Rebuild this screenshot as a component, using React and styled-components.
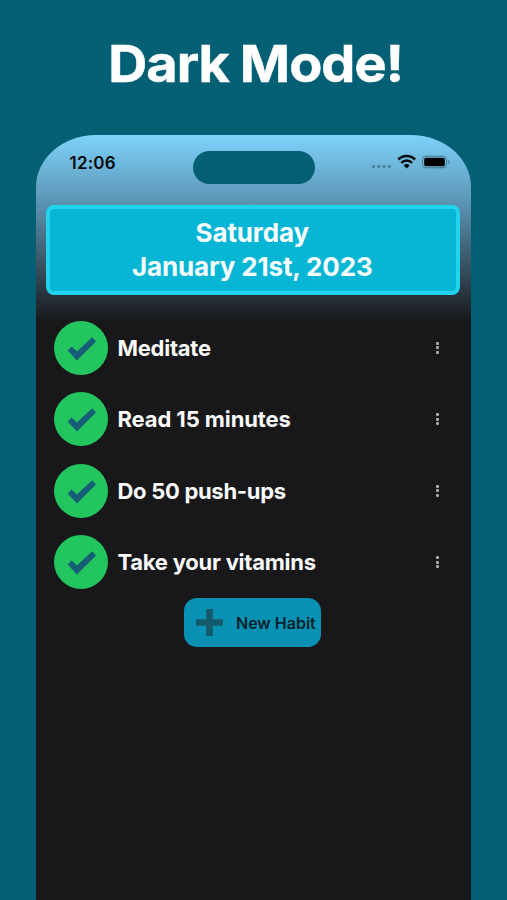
import React from 'react';
import styled, { createGlobalStyle } from 'styled-components';

const GlobalStyle = createGlobalStyle`
* {
    box-sizing: border-box;
}
body {
    margin: 0;
    background: #035f73;
    font-family: Inter, "Liberation Sans", sans-serif;
}
`

const Page = styled.main`
display: flex;
flex-direction: column;
width: 507px;
height: 900px;
overflow: hidden;
background: #035f73;
`

const Title = styled.h1`
display: flex;
justify-content: center;
align-items: center;
height: 135px;
margin: 0;
padding: 0 0 7px 4px;
color: #fff;
font-size: 51px;
font-weight: 700;
line-height: 60px;
letter-spacing: -0.9px;
word-spacing: -1px;
white-space: nowrap;
transform: scaleX(1.06);
-webkit-text-stroke: 0.5px #fff;
`

const Phone = styled.section`
flex: 1;
width: 435px;
margin-left: 36px;
padding: 0 11px 0 9.5px;
border-radius: 60px 60px 0 0 / 52px 52px 0 0;
background: linear-gradient(#7dd2fb 0, #5a92b1 70px, #18181a 186px);
`

const StatusBar = styled.header`
display: grid;
grid-template-columns: 147px 122px 1fr;
height: 70px;
padding-top: 15.5px;
`

const Time = styled.time`
padding-left: 24px;
color: #050a0d;
font-size: 17px;
font-weight: 600;
line-height: 24px;
letter-spacing: 0.2px;
`

const Island = styled.div`
height: 33.5px;
border-radius: 17px;
background: #035f73;
`

const StatusIcons = styled.div`
padding: 3.5px 0 0 55.5px;
svg {
    display: block;
}
`

const DateCard = styled.div`
display: flex;
flex-direction: column;
align-items: center;
height: 89.5px;
padding: 7px 1px 0 0;
border: 4px solid #22d3ee;
border-radius: 8px;
background: #06b6d4;
color: #f8fdff;
font-size: 26px;
font-weight: 700;
line-height: 34px;
`

const DateLine = styled.div`
letter-spacing: ${({ $spacing }) => $spacing}px;
`

const HabitList = styled.ul`
display: flex;
flex-direction: column;
gap: 17.5px;
margin: 0;
padding: 26.4px 16.5px 0 8.5px;
list-style: none;
`

const HabitItem = styled.li`
display: flex;
align-items: center;
height: 54px;
`

const CheckCircle = styled.div`
width: 54px;
height: 54px;
border-radius: 50%;
background: #22c55e;
svg {
    display: block;
}
`

const HabitName = styled.span`
flex: 1;
padding-left: 9.5px;
color: #fafafa;
font-size: 22px;
font-weight: 700;
letter-spacing: ${({ $spacing }) => $spacing}px;
`

const MenuDots = styled.div`
display: flex;
flex-direction: column;
gap: 1.5px;
width: 8px;
i {
    width: 3px;
    height: 3px;
    border-radius: 1px;
    background: #a9a9ab;
}
`

const NewHabitButton = styled.button`
display: flex;
align-items: center;
width: 137px;
height: 49.5px;
margin: 8.5px 0 0 138.5px;
padding: 0 0 0 11.5px;
border: 0;
border-radius: 13px;
background: #0891b2;
color: #06222c;
font-family: inherit;
font-size: 16px;
font-weight: 600;
white-space: nowrap;
svg {
    flex: none;
    margin-right: 13.5px;
}
`

const habits = [
    { name: 'Meditate', spacing: -0.25 },
    { name: 'Read 15 minutes', spacing: -0.1 },
    { name: 'Do 50 push-ups', spacing: -0.3 },
    { name: 'Take your vitamins', spacing: -0.25 },
]

const SignalIcons = () => {
    return (
        <svg width="80" height="16" viewBox="0 0 80 16">
            <g fill="#4e809b">
                <rect x="2" y="11" width="3" height="3" rx="1"/>
                <rect x="7.3" y="11" width="3" height="3" rx="1"/>
                <rect x="12.6" y="11" width="3" height="3" rx="1"/>
                <rect x="17.9" y="11" width="3" height="3" rx="1"/>
            </g>
            <g fill="none" stroke="#04090c" strokeWidth="2.6">
                <path d="M28.3 5.5a11.8 11.8 0 0 1 16.8 0"/>
                <path d="M31.4 8.8a7.4 7.4 0 0 1 10.6 0"/>
            </g>
            <path d="M33.8 11.4a4.2 4.2 0 0 1 5.8 0L36.7 14.4z" fill="#04090c"/>
            <rect x="52.5" y="2.2" width="24" height="11.6" rx="3.4" fill="none" stroke="#47758e"/>
            <rect x="54.2" y="3.8" width="20.6" height="8.4" rx="1.8" fill="#000"/>
            <path d="M78.3 6v4c1.6-.7 1.6-3.3 0-4z" fill="#47758e"/>
        </svg>
    )
}

const App = () => {
    return (
        <>
            <GlobalStyle/>
            <Page>
                <Title>Dark Mode!</Title>
                <Phone>
                    <StatusBar>
                        <Time>12:06</Time>
                        <Island/>
                        <StatusIcons><SignalIcons/></StatusIcons>
                    </StatusBar>
                    <DateCard>
                        <DateLine $spacing={-0.15}>Saturday</DateLine>
                        <DateLine $spacing={-0.15}>January 21st, 2023</DateLine>
                    </DateCard>
                    <HabitList>
                        {habits.map(({ name, spacing }) => (
                            <HabitItem key={name}>
                                <CheckCircle>
                                    <svg width="54" height="54" viewBox="0 0 54 54">
                                        <path d="M13.6 29.4L17.7 25.4L22.8 30.6L38.3 16.2L42 20.6L22.9 39.4z" fill="#155e75"/>
                                    </svg>
                                </CheckCircle>
                                <HabitName $spacing={spacing}>{name}</HabitName>
                                <MenuDots><i/><i/><i/></MenuDots>
                            </HabitItem>
                        ))}
                    </HabitList>
                    <NewHabitButton>
                        <svg width="27" height="27" viewBox="0 0 27 27">
                            <path d="M10.2 0h6.6v10.2H27v6.6H16.8V27h-6.6V16.8H0v-6.6h10.2z" fill="#15596c"/>
                        </svg>
                        New Habit
                    </NewHabitButton>
                </Phone>
            </Page>
        </>
    )
}

export default App
